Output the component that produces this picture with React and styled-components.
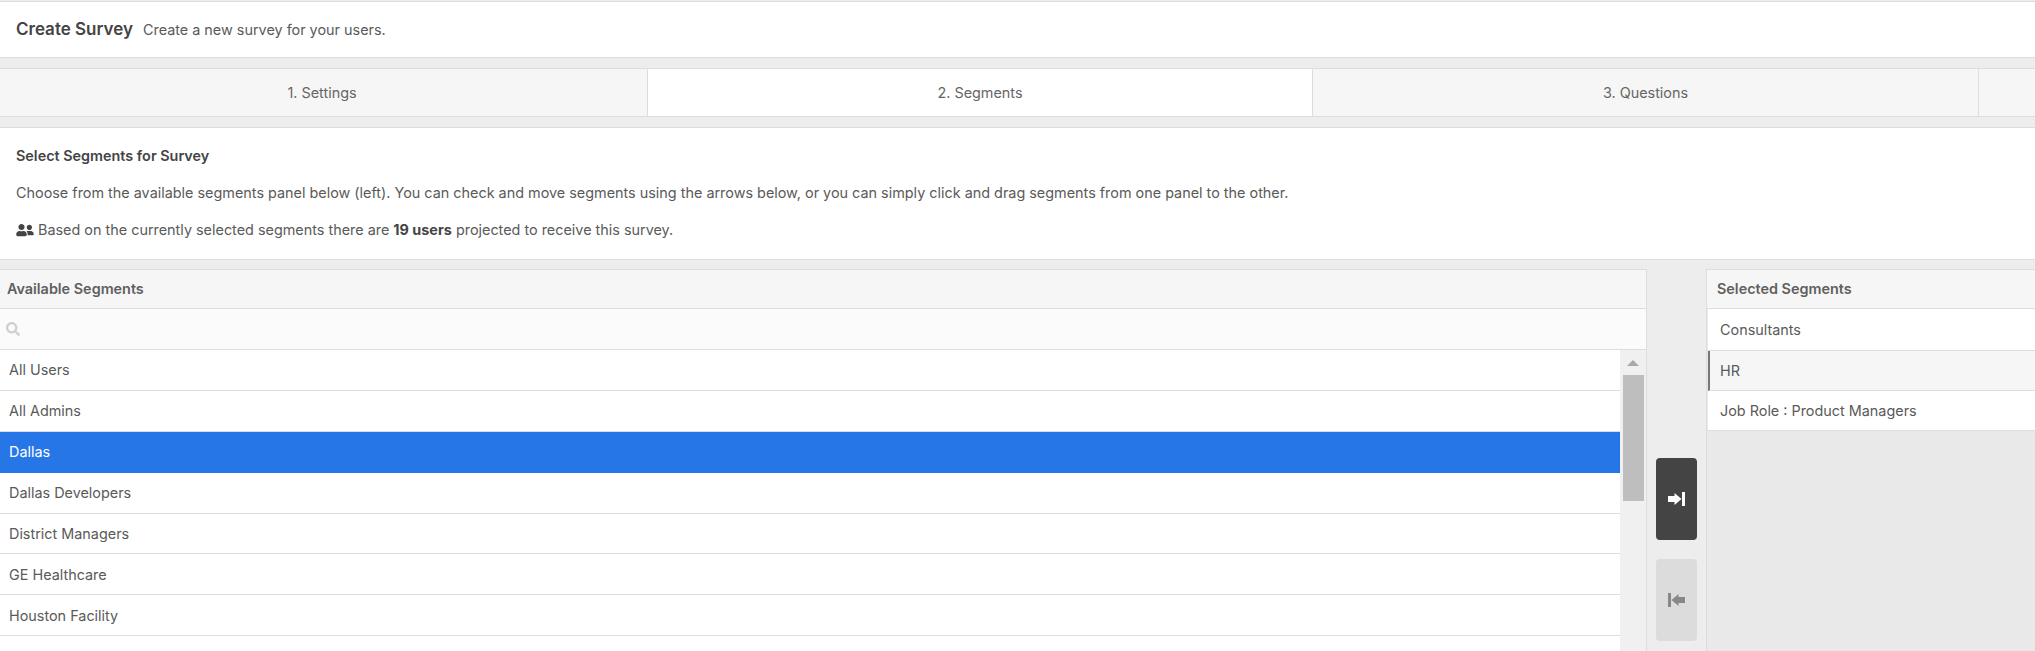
import React from 'react'
import styled, { createGlobalStyle } from 'styled-components'

const GlobalStyle = createGlobalStyle`
  html, body {
    margin: 0;
    height: 100%;
    overflow: hidden;
    background: #ededed;
  }
  body {
    font-family: Inter, "Liberation Sans", sans-serif;
    font-size: 14.4px;
    color: #5a5a5a;
  }
`

const Page = styled.div`
  width: 2035px;
  height: 651px;
  overflow: hidden;
  display: flex;
  flex-direction: column;
  gap: 10px;
`

const PageHeader = styled.header`
  height: 55px;
  flex: none;
  margin-top: 1px;
  display: flex;
  align-items: center;
  gap: 10px;
  padding: 0 16px;
  background: #fff;
  border-top: 1px solid #ddd;
  border-bottom: 1px solid #ddd;
`

const PageTitle = styled.h1`
  margin: 0 0 1px;
  font-size: 17px;
  font-weight: 600;
  color: #444;
`

const PageSubtitle = styled.span`
  margin-bottom: 1px;
`

const Tabs = styled.nav`
  display: flex;
  height: 47px;
  flex: none;
  background: #f6f6f6;
  border-top: 1px solid #ddd;
  border-bottom: 1px solid #ddd;
`

const Tab = styled.div`
  flex: none;
  box-sizing: border-box;
  width: ${(p) => p.$width}px;
  display: flex;
  align-items: center;
  justify-content: center;
  padding-bottom: 1px;
  color: #666;
  background: ${(p) => (p.$active ? '#fff' : '#f6f6f6')};
  border-right: 1px solid #ddd;

  &:first-child {
    padding-right: 3px;
  }

  &:last-child {
    border-right: none;
  }
`

const Intro = styled.section`
  flex: none;
  height: 133px;
  box-sizing: border-box;
  padding: 20px 16px 0;
  background: #fff;
  border-top: 1px solid #ddd;
  border-bottom: 1px solid #ddd;
`

const IntroTitle = styled.h2`
  margin: 0 0 21px;
  font-size: 14.4px;
  line-height: 16px;
  font-weight: 600;
  color: #444;
`

const IntroText = styled.p`
  margin: 0 0 21px;
  line-height: 16px;
  display: flex;
  align-items: center;
  gap: 4px;
  white-space: pre;

  strong {
    font-weight: 700;
    color: #444;
  }
`

const Columns = styled.div`
  flex: 1;
  min-height: 0;
  margin-top: -1px;
  display: flex;
`

const Panel = styled.section`
  flex: ${(p) => (p.$grow ? '1' : 'none')};
  box-sizing: border-box;
  width: ${(p) => (p.$grow ? 'auto' : '1647px')};
  display: flex;
  flex-direction: column;
  background: ${(p) => p.$bg};
  border-top: 1px solid #ddd;
  border-left: ${(p) => (p.$grow ? '1px solid #ddd' : 'none')};
  border-right: ${(p) => (p.$grow ? 'none' : '1px solid #ddd')};
`

const PanelHeader = styled.div`
  flex: none;
  box-sizing: border-box;
  height: 39px;
  display: flex;
  align-items: center;
  padding-left: ${(p) => (p.$grow ? '10px' : '7px')};
  padding-bottom: 1px;
  font-weight: 600;
  color: #5f5f5f;
  background: #f6f6f6;
  border-bottom: 1px solid #ddd;
`

const SearchRow = styled.div`
  flex: none;
  height: 40px;
  display: flex;
  align-items: center;
  padding-left: 6px;
  background: #fbfbfb;
  border-bottom: 1px solid #ddd;
  color: #cfcfcf;
`

const ListArea = styled.div`
  flex: 1;
  min-height: 0;
  display: flex;
`

const List = styled.ul`
  flex: 1;
  margin: 0;
  padding: 0;
  list-style: none;
`

const Row = styled.li`
  box-sizing: border-box;
  height: 40.9px;
  display: flex;
  align-items: center;
  padding-left: 9px;
  color: ${(p) => (p.$selected ? '#fff' : '#5a5a5a')};
  background: ${(p) => (p.$selected ? '#2776e8' : '#fff')};
  border-bottom: 1px solid ${(p) => (p.$selected ? '#2776e8' : '#ddd')};
`

const SelectedRow = styled.li`
  height: ${(p) => p.$height}px;
  display: flex;
  align-items: center;
  margin-left: 1px;
  padding-left: ${(p) => (p.$focused ? '10px' : '12px')};
  background: ${(p) => (p.$focused ? '#f6f6f6' : '#fff')};
  border-left: ${(p) => (p.$focused ? '2px solid #777' : 'none')};
  border-bottom: 1px solid #ddd;
`

const Scrollbar = styled.div`
  flex: none;
  width: 26px;
  position: relative;
  background: #f0f0f0;
`

const ScrollArrow = styled.div`
  position: absolute;
  top: 10px;
  left: 7px;
  width: 0;
  height: 0;
  border-left: 6px solid transparent;
  border-right: 6px solid transparent;
  border-bottom: 6px solid #a8a8a8;
`

const ScrollThumb = styled.div`
  position: absolute;
  top: 25px;
  left: 3px;
  width: 21px;
  height: 126px;
  background: #bebebe;
`

const MoveColumn = styled.div`
  flex: none;
  width: 59px;
  display: flex;
  flex-direction: column;
  align-items: center;
  gap: 19px;
  padding-top: 189px;
  box-sizing: border-box;
`

const MoveButton = styled.button`
  flex: none;
  width: 41px;
  height: 82px;
  padding: 0;
  border: none;
  border-radius: 4px;
  display: flex;
  align-items: center;
  justify-content: center;
  background: ${(p) => (p.$disabled ? '#dcdcdc' : '#444')};
  color: ${(p) => (p.$disabled ? '#888' : '#fff')};
`

const SearchIcon = () => (
  <svg width="14" height="14" viewBox="0 0 512 512" fill="currentColor">
    <path d="M505 442.700L405.300 343c-4.500-4.500-10.600-7-17-7H372c27.600-35.300 44-79.700 44-128C416 93.100 322.900 0 208 0S0 93.100 0 208s93.100 208 208 208c48.300 0 92.700-16.400 128-44v16.300c0 6.400 2.500 12.500 7 17l99.700 99.700c9.400 9.400 24.600 9.400 33.900 0l28.300-28.300c9.400-9.400 9.400-24.600.1-34zM208 336c-70.700 0-128-57.200-128-128 0-70.700 57.200-128 128-128 70.700 0 128 57.200 128 128 0 70.700-57.200 128-128 128z" />
  </svg>
)

const UsersIcon = () => (
  <svg width="18" height="14" viewBox="0 0 640 512" fill="#444">
    <path d="M192 256c61.900 0 112-50.100 112-112S253.900 32 192 32 80 82.100 80 144s50.100 112 112 112zm76.800 32h-8.300c-20.800 10-43.900 16-68.500 16s-47.600-6-68.500-16h-8.300C51.600 288 0 339.600 0 403.200V432c0 26.500 21.500 48 48 48h288c26.500 0 48-21.500 48-48v-28.800c0-63.600-51.600-115.200-115.200-115.200zM480 256c53 0 96-43 96-96s-43-96-96-96-96 43-96 96 43 96 96 96zm48 32h-3.800c-13.900 4.800-28.600 8-44.200 8s-30.300-3.200-44.200-8H432c-20.400 0-39.200 5.900-55.700 15.400 24.400 26.300 39.700 61.200 39.700 99.800v38.400c0 2.200-.5 4.300-.6 6.400H592c26.500 0 48-21.500 48-48 0-61.900-50.100-112-112-112z" />
  </svg>
)

const ArrowToBar = ({ flip }) => (
  <svg width="17" height="14" viewBox="0 0 17 14" fill="currentColor" style={flip ? { transform: 'scaleX(-1)' } : undefined}>
    <path d="M0 4h6.500V1L13.500 7l-7 6v-3H0z" />
    <rect x="14" y="0" width="3" height="14" />
  </svg>
)

const steps = [
  { label: '1. Settings', width: 648 },
  { label: '2. Segments', width: 665, active: true },
  { label: '3. Questions', width: 666 },
  { label: '', width: 56 },
]

const available = ['All Users', 'All Admins', 'Dallas', 'Dallas Developers', 'District Managers', 'GE Healthcare', 'Houston Facility', 'Inside Team']

export default function App() {
  return (
    <Page>
      <GlobalStyle />
      <PageHeader>
        <PageTitle>Create Survey</PageTitle>
        <PageSubtitle>Create a new survey for your users.</PageSubtitle>
      </PageHeader>

      <Tabs>
        {steps.map((step) => (
          <Tab key={step.width + step.label} $width={step.width} $active={step.active}>
            {step.label}
          </Tab>
        ))}
      </Tabs>

      <Intro>
        <IntroTitle>Select Segments for Survey</IntroTitle>
        <IntroText>
          Choose from the available segments panel below (left). You can check and move segments using the arrows below, or you can simply click and drag segments from one panel to the other.
        </IntroText>
        <IntroText>
          <UsersIcon />
          <span>
            Based on the currently selected segments there are <strong>19 users</strong> projected to receive this survey.
          </span>
        </IntroText>
      </Intro>

      <Columns>
        <Panel $bg="#fff">
          <PanelHeader>Available Segments</PanelHeader>
          <SearchRow>
            <SearchIcon />
          </SearchRow>
          <ListArea>
            <List>
              {available.map((name) => (
                <Row key={name} $selected={name === 'Dallas'}>
                  {name}
                </Row>
              ))}
            </List>
            <Scrollbar>
              <ScrollArrow />
              <ScrollThumb />
            </Scrollbar>
          </ListArea>
        </Panel>

        <MoveColumn>
          <MoveButton>
            <ArrowToBar />
          </MoveButton>
          <MoveButton $disabled>
            <ArrowToBar flip />
          </MoveButton>
        </MoveColumn>

        <Panel $grow $bg="#e9e9e9">
          <PanelHeader $grow>Selected Segments</PanelHeader>
          <List>
            <SelectedRow $height={41}>Consultants</SelectedRow>
            <SelectedRow $height={39} $focused>HR</SelectedRow>
            <SelectedRow $height={39}>Job Role : Product Managers</SelectedRow>
          </List>
        </Panel>
      </Columns>
    </Page>
  )
}
